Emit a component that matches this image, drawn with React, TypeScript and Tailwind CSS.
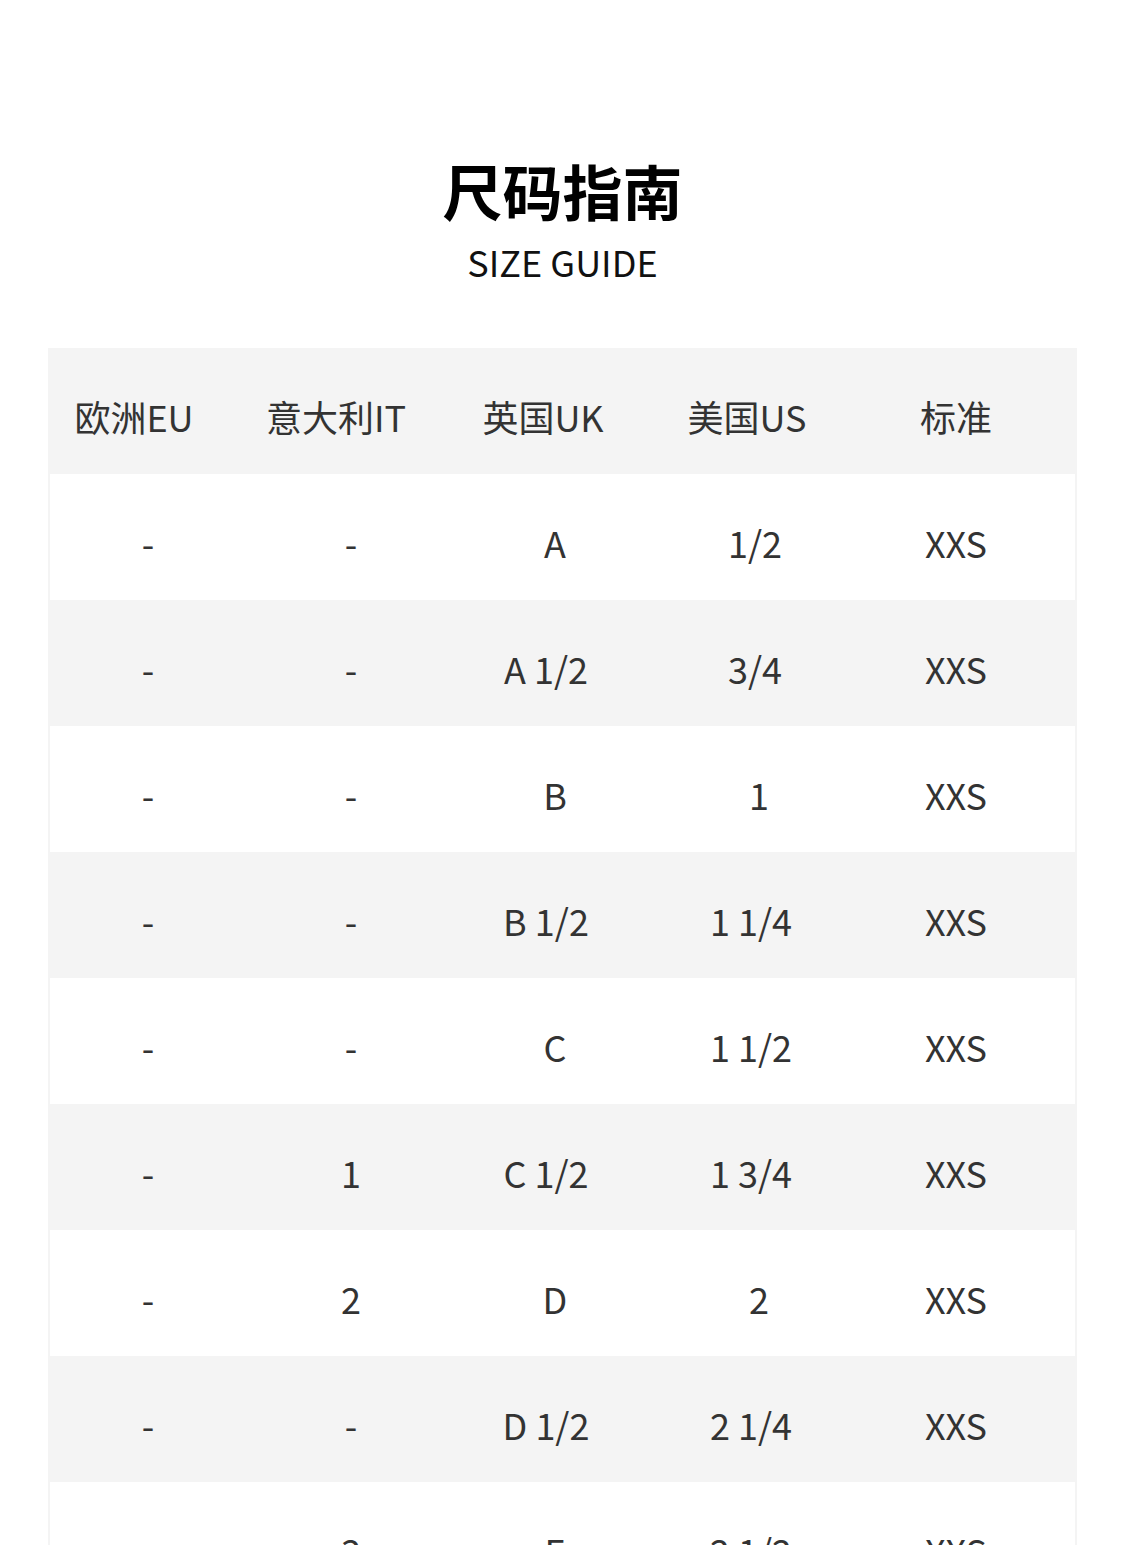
const rows = [
    ["-", "-", "A", "1/2", "XXS"],
    ["-", "-", "A 1/2", "3/4", "XXS"],
    ["-", "-", "B", "1", "XXS"],
    ["-", "-", "B 1/2", "1 1/4", "XXS"],
    ["-", "-", "C", "1 1/2", "XXS"],
    ["-", "1", "C 1/2", "1 3/4", "XXS"],
    ["-", "2", "D", "2", "XXS"],
    ["-", "-", "D 1/2", "2 1/4", "XXS"],
    ["-", "3", "E", "2 1/2", "XXS"],
];

// column widths picked so the cell centres line up with the chart
const colW = ["w-[196px]", "w-[210px]", "w-[198px]", "w-[210px]", "w-[184px]"];
const headPad = ["pr-[28px]", "pr-[30px]", "pr-[24px]", "pr-[24px]", "pr-0"];
const heads = ["欧洲EU", "意大利IT", "英国UK", "美国US", "标准"];

// the chart's longer values sit a little left of the column centre
const cellPad = (i: number, c: string) => {
    if (i === 2 && c.length > 1) return "pr-[18px]";
    if (i === 3 && c.length === 3) return "pr-[8px]";
    if (i === 3 && c.length > 3) return "pr-[16px]";
    return "";
};

const App = () => {
    return (
        <div
            className="w-[1125px] h-[1545px] overflow-hidden bg-white flex flex-col items-center pt-[160px]"
            style={{ fontFamily: '"Noto Sans CJK SC", "Noto Sans", sans-serif' }}
        >
            <h1 className="text-[60px] leading-none font-bold text-black">尺码指南</h1>
            <div className="mt-[23px] text-[36px] leading-none text-[#111]">SIZE GUIDE</div>

            <div className="mt-[69px] self-start ml-[48px] w-[1029px] bg-[#f4f4f4] px-[2px]">
                <div className="flex h-[126px] items-center pt-[10px] text-[36px] text-[#333]">
                    {heads.map((h, i) => (
                        <div key={h} className={`${colW[i]} ${headPad[i]} text-center`}>{h}</div>
                    ))}
                </div>
                {rows.map((r, idx) => (
                    <div
                        key={idx}
                        className={`flex h-[126px] items-center pt-[10px] text-[36px] text-[#333] ${idx % 2 === 0 ? "bg-white" : "bg-[#f4f4f4]"}`}
                    >
                        {r.map((c, i) => (
                            <div key={i} className={`${colW[i]} ${cellPad(i, c)} text-center`}>{c}</div>
                        ))}
                    </div>
                ))}
            </div>
        </div>
    );
};

export default App;
